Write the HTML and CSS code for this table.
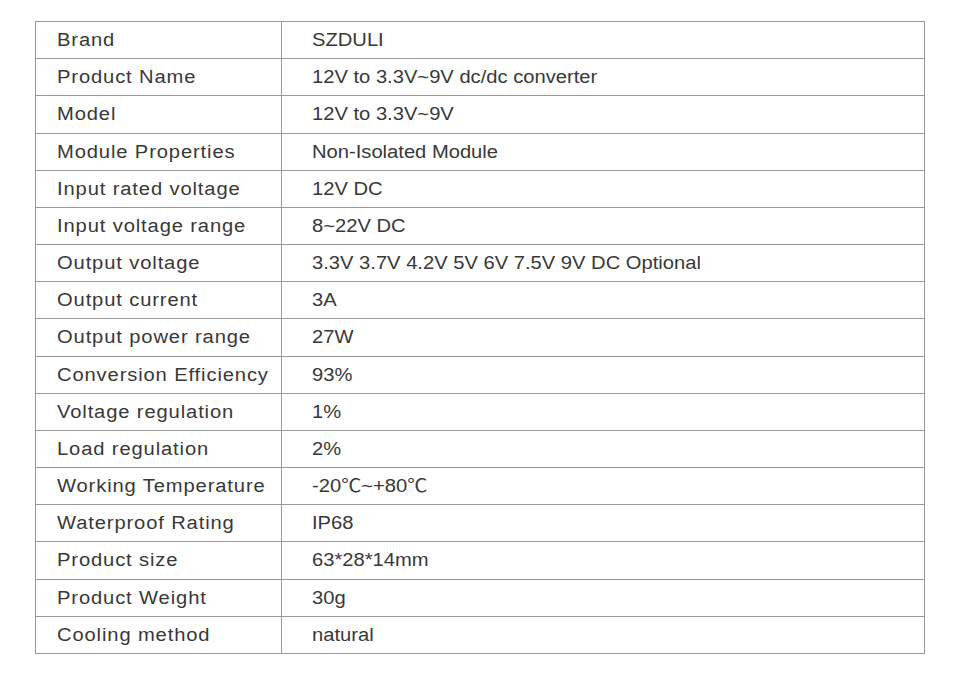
FILE: index.html
```html
<!DOCTYPE html>
<html>
<head>
<meta charset="utf-8">
<link rel="stylesheet" href="styles.css">
</head>
<body>
<table class="spec">
<tr><td class="k"><span>Brand</span></td><td class="v"><span>SZDULI</span></td></tr>
<tr><td class="k"><span>Product Name</span></td><td class="v"><span>12V to 3.3V~9V dc/dc converter</span></td></tr>
<tr><td class="k"><span>Model</span></td><td class="v"><span>12V to 3.3V~9V</span></td></tr>
<tr><td class="k"><span>Module Properties</span></td><td class="v"><span>Non-Isolated Module</span></td></tr>
<tr><td class="k"><span>Input rated voltage</span></td><td class="v"><span>12V DC</span></td></tr>
<tr><td class="k"><span>Input voltage range</span></td><td class="v"><span>8~22V DC</span></td></tr>
<tr><td class="k"><span>Output voltage</span></td><td class="v"><span>3.3V 3.7V 4.2V 5V 6V 7.5V 9V DC Optional</span></td></tr>
<tr><td class="k"><span>Output current</span></td><td class="v"><span>3A</span></td></tr>
<tr><td class="k"><span>Output power range</span></td><td class="v"><span>27W</span></td></tr>
<tr><td class="k"><span>Conversion Efficiency</span></td><td class="v"><span>93%</span></td></tr>
<tr><td class="k"><span>Voltage regulation</span></td><td class="v"><span>1%</span></td></tr>
<tr><td class="k"><span>Load regulation</span></td><td class="v"><span>2%</span></td></tr>
<tr><td class="k"><span>Working Temperature</span></td><td class="v"><span>-20℃~+80℃</span></td></tr>
<tr><td class="k"><span>Waterproof Rating</span></td><td class="v"><span>IP68</span></td></tr>
<tr><td class="k"><span>Product size</span></td><td class="v"><span>63*28*14mm</span></td></tr>
<tr><td class="k"><span>Product Weight</span></td><td class="v"><span>30g</span></td></tr>
<tr><td class="k"><span>Cooling method</span></td><td class="v"><span>natural</span></td></tr>
</table>
</body>
</html>
```
FILE: styles.css
```css
html, body {
  margin: 0;
  padding: 0;
  background: #fff;
}
body {
  padding: 21px 0 0 35px;
  font-family: "Liberation Sans", Arial, "Noto Sans CJK SC", sans-serif;
  color: #383838;
}
.spec {
  border-collapse: collapse;
  width: 890px;
  table-layout: fixed;
}
.spec tr {
  height: 37.18px;
}
.spec td {
  border: 1px solid #9a9a9a;
  padding: 0;
  font-size: 18px;
  line-height: 20px;
  vertical-align: middle;
  white-space: nowrap;
  overflow: visible;
}
.spec td span {
  display: inline-block;
  transform: scaleX(1.12);
  transform-origin: 0 50%;
}
.spec td.k {
  width: 246px;
  padding-left: 21px;
  letter-spacing: 0.78px;
  box-sizing: border-box;
}
.spec td.v {
  padding-left: 30px;
}
```
